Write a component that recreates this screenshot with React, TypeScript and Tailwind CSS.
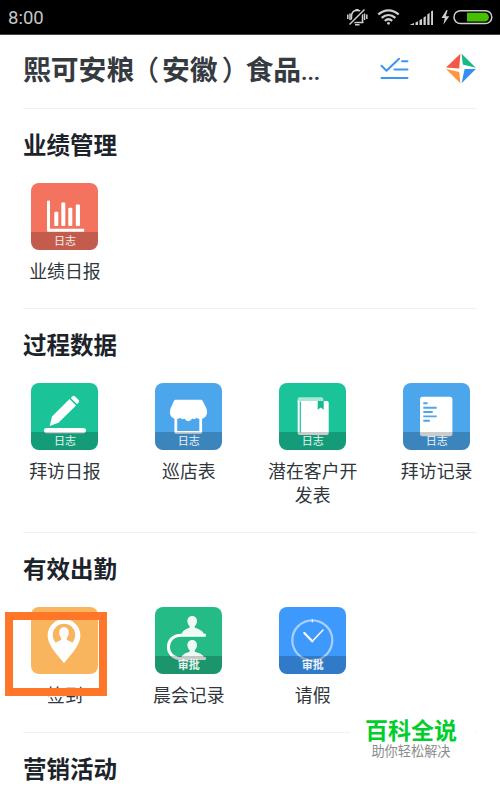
import React from "react";

type Item = { label: string; bg: string; badge?: string; badgeBold?: boolean; icon: React.ReactNode };

const chart = (
  <g fill="#fff">
    <path d="M16 18.5q0-1 1.5-1t1.5 1V45.8H52.3q1 0 1 1.5t-1 1.5H17q-1 0-1-1z" />
    <rect x="23.3" y="28.7" width="4" height="14.3" rx="1" />
    <rect x="30.3" y="19.5" width="4" height="23.5" rx="1" />
    <rect x="37.3" y="24.7" width="4" height="18.3" rx="1" />
    <rect x="44.8" y="21.5" width="4.2" height="21.5" rx="1" />
  </g>
);

const pencil = (
  <g fill="#fff">
    <path d="M18.6 43 21 33.5 38.6 16 45 22.4 27.5 39.8z" />
    <path d="M39.8 14.9 41.7 13.2q1.2-.8 2.4.3l3.6 3.6q1 1.2 0 2.4l-1.7 1.8z" />
    <rect x="13" y="45" width="42" height="5.2" rx="2.4" />
  </g>
);

const shop = (
  <g>
    <path d="M20.8 34V49.3H45.7V34" fill="none" stroke="#fff" strokeWidth="2.8" strokeLinejoin="round" />
    <path
      d="M20.500 16.700H46q1 0 1.600 1L51.700 26q1.200 4-.8 7.200-2 2.600-5.200 2.600h-2q-1.200 0-2.200-1-1.800 2.400-4.200.8-1.800 2.600-4 2.600t-4-2.600q-2.400 1.600-4.200-.8-1 1-2.200 1h-2q-3.200 0-5-2.600-1.800-3.200-.6-7.200L19 17.700q.6-1 1.500-1z"
      fill="#fff"
    />
  </g>
);

const book = (
  <g>
    <path d="M20.5 14.3H42.5q1.8 0 1.8 1.8v4H18.7v-4q0-1.8 1.8-1.8z" fill="#a9e8d2" />
    <path d="M18.7 17q.5 1 2 1H48q1.7 0 1.7 1.7V50.3q0 1.7-1.7 1.7H20.7q-2 0-2-2z" fill="#fff" />
    <path d="M21.3 18.5V49.5" stroke="#18c397" strokeWidth="1.2" />
    <path d="M38.7 18h6v8.7l-3-2.3-3 2.3z" fill="#18b98f" />
  </g>
);

const paper = (
  <g>
    <rect x="17" y="13.7" width="32.4" height="39.5" rx="2.5" fill="#fff" />
    <path d="M20.3 20.3h4.3M20.3 24.7h13.4M20.3 29h9.4M20.3 33.4h13.4M20.3 37.7h6.5" stroke="#4ca5ea" strokeWidth="1.9" />
  </g>
);

const pin = (
  <g>
    <path d="M33 56.2C28 49.5 16.6 39 16.6 28.5a16.4 16.4 0 0 1 32.8 0C49.4 39 38 49.5 33 56.2z" fill="#fff" />
    <circle cx="33" cy="28" r="11.2" fill="#f8b55e" />
    <path
      d="M33 20.3c3 0 4.8 2.2 4.8 5.2 0 2.3-.8 4-2 5.2v2.2c1.8.9 4 1.4 5.6 2.8-2 3.2-5.2 4.8-8.4 4.8s-6.4-1.6-8.4-4.8c1.6-1.4 3.8-1.9 5.6-2.8v-2.2c-1.2-1.2-2-2.9-2-5.2 0-3 1.8-5.2 4.8-5.2z"
      fill="#fff"
    />
  </g>
);

const meeting = (
  <g>
    <path d="M50.8 28.2H26.5C17.5 28.2 13.4 34 13.4 40S18 51.6 26.5 51.6H50.8" fill="none" stroke="#fff" strokeWidth="3" />
    <g fill="#effaf5">
      <path d="M37.2 9c3 0 4.8 2.2 4.8 5.1 0 2.5-1.2 4.2-2.2 5.1v1.5c4 1.2 8.2 2.8 9.7 7.3H26c1.5-4.5 4.6-6.1 8.6-7.3v-1.5c-1-.9-2.2-2.6-2.2-5.1C32.4 11.2 34.2 9 37.2 9z" />
      <path d="M37.2 33c3 0 4.8 2.2 4.8 5.1 0 2.5-1.2 4.2-2.2 5.1v1.5c4 1.2 8.2 2.3 9.7 6.4H26c1.5-4.1 4.6-5.2 8.6-6.4v-1.5c-1-.9-2.2-2.6-2.2-5.1 0-2.9 1.8-5.1 4.8-5.1z" />
    </g>
  </g>
);

const clock = (
  <g fill="none" stroke="#fff" strokeLinecap="round">
    <circle cx="33.3" cy="33.3" r="20" stroke="#a6cffd" strokeWidth="2.3" />
    <path d="M33.3 12.8v2" strokeWidth="1.2" />
    <path d="M25.3 26 33.3 34.3" strokeWidth="2.2" />
    <path d="M33.3 34.3 44 23" strokeWidth="1.5" />
  </g>
);

const sections: { title: string; height: string; items: Item[] }[] = [
  {
    title: "业绩管理",
    height: "h-[200px]",
    items: [{ label: "业绩日报", bg: "bg-[#f4735f]", badge: "日志", icon: chart }],
  },
  {
    title: "过程数据",
    height: "h-[224px]",
    items: [
      { label: "拜访日报", bg: "bg-[#1ac398]", badge: "日志", icon: pencil },
      { label: "巡店表", bg: "bg-[#4ca6eb]", badge: "日志", icon: shop },
      { label: "潜在客户开发表", bg: "bg-[#1ac398]", badge: "日志", icon: book },
      { label: "拜访记录", bg: "bg-[#4ca6eb]", badge: "日志", icon: paper },
    ],
  },
  {
    title: "有效出勤",
    height: "h-[200px]",
    items: [
      { label: "签到", bg: "bg-[#f8b55e]", icon: pin },
      { label: "晨会记录", bg: "bg-[#25bb87]", badge: "审批", badgeBold: true, icon: meeting },
      { label: "请假", bg: "bg-[#3d99fb]", badge: "审批", badgeBold: true, icon: clock },
    ],
  },
  { title: "营销活动", height: "h-[58px]", items: [] },
];

function Tile({ item }: { item: Item }) {
  return (
    <div className="flex flex-col items-center">
      <div className={`relative size-[67px] overflow-hidden rounded-[8px] ${item.bg}`}>
        <svg viewBox="0 0 67 67" className="block size-full">{item.icon}</svg>
        {item.badge && (
          <div
            className={`absolute inset-x-0 bottom-0 h-[18px] bg-black/20 text-center text-[11px] leading-[16px] text-white/90 ${item.badgeBold ? "font-bold" : ""}`}
          >
            {item.badge}
          </div>
        )}
      </div>
      <div className="mt-[8px] w-[92px] text-center text-[17.9px] leading-[24px] text-[#30363c]">{item.label}</div>
    </div>
  );
}

function StatusBar() {
  return (
    <header className="flex h-[35px] items-center justify-between border-b border-[#4b4247] bg-black pl-[8px] pr-[7px]">
      <span className="pt-[3px] font-[Roboto] text-[18.5px] leading-none text-[#c6c6c6]">8:00</span>
      <svg viewBox="345 0 148 34" className="h-[34px] w-[148px]" fill="none" stroke="#cfcfcf">
        <g strokeWidth="1.5">
          <path d="M350 22.5h13.5M351.5 22v-5.500c0-4 2.200-6 5.500-6.200 3.400.2 5.500 2.200 5.500 6.200V22M355.300 9.800h3.400M355 24.800h4.500" />
          <path d="M347.8 14.5v4.500M350 13.500v6.500M364.500 13.500v6.500M366.800 14.500v4.500" />
          <path d="M350 24 364.500 9.500" stroke="#000" strokeWidth="4" />
          <path d="M349.5 24.5 364.5 9.5" />
        </g>
        <g strokeWidth="2.3">
          <path d="M378.3 14.5c6-5.6 14.4-5.6 20.4 0M381.600 17.800c4.200-3.700 9.600-3.700 13.800 0M384.800 20.800c2.300-1.900 5.100-1.900 7.400 0" />
          <circle cx="388.5" cy="23.3" r="1.4" fill="#cfcfcf" stroke="none" />
        </g>
        <path
          d="M409.500 25 414 23V25zM415.500 22.500l2.500-1.200V25h-2.500zM419.500 20.300l2.500-1.500V25h-2.500zM423.500 17.500l2.300-1.500v9h-2.300zM427.300 14.500l2.300-1.700V25h-2.300zM431.100 11.500l.6-.8h1.300V25h-1.900z"
          fill="#cfcfcf"
          stroke="none"
        />
        <path d="M446.5 10 441.5 18h3.300l-1.500 6.800 6-8.600h-3.500l1.800-6.200z" fill="#cfcfcf" stroke="none" />
        <rect x="454" y="10.7" width="37.8" height="12.9" rx="6.45" strokeWidth="1.5" />
        <path d="M467 12.8h17.500a4.400 4.400 0 0 1 0 8.800H467z" fill="#45c000" stroke="none" />
      </svg>
    </header>
  );
}

export default function App() {
  return (
    <div className="relative h-[790px] w-[500px] overflow-hidden bg-white font-['Noto_Sans_CJK_SC',sans-serif]">
      <StatusBar />
      <div className="flex h-[73px] items-center justify-between pl-[23px] pr-[23px]">
        <h1 className="whitespace-nowrap pb-[5px] text-[27.8px] font-bold leading-none text-[#343a40]">
          熙可安粮<span className="-ml-[3px] mr-[3px] font-medium">（</span>安徽
          <span className="-mr-[4px] ml-[4px] font-medium">）</span>食品
          <span className="font-['Roboto'] text-[22px]">...</span>
        </h1>
        <svg viewBox="378 50 99 35" className="mb-[6px] h-[35px] w-[99px]">
          <g fill="none" stroke="#3b96f3" strokeWidth="2" strokeLinecap="round" strokeLinejoin="round">
            <path d="M381.5 64.8 386.5 69.8 399 57.8M402 60.300h5.500M394.500 68.600h13M381.500 77h26" />
          </g>
          <path d="M460.4 52.8 459.2 67.600 446 66.500z" fill="#ef5945" />
          <path d="M461.600 52.800 475.800 66.800 462.800 63.600z" fill="#17b985" />
          <path d="M446 68 459.300 71 460.400 82.300z" fill="#ff963d" />
          <path d="M475.800 68 461.600 82.300 464.600 68z" fill="#348ff5" />
        </svg>
      </div>
      <main>
        {sections.map((s) => (
          <section key={s.title} className={`overflow-hidden ${s.height}`}>
            <div className="mx-[23px] h-px bg-[#f1f1f2]" />
            <h2 className="mt-[23px] pl-[23px] text-[23.5px] font-bold leading-[24px] text-[#1c232a]">{s.title}</h2>
            <div className="ml-[3px] mt-[26.6px] grid w-[495.600px] grid-cols-4">
              {s.items.map((item) => (
                <Tile key={item.label} item={item} />
              ))}
            </div>
          </section>
        ))}
      </main>
      <div className="absolute left-[5px] top-[612px] h-[84px] w-[102px] border-[8.5px] border-[#ff7629]" />
      <div className="absolute left-[350px] top-[713px] flex h-[50px] w-[125px] flex-col items-center bg-white pr-[3px] pt-[4px]">
        <div className="text-[23px] font-bold leading-[24px] text-[#00ce2d]">百科全说</div>
        <div className="mt-px text-[13.2px] leading-[18px] text-[#8b8b8b]">助你轻松解决</div>
      </div>
    </div>
  );
}
